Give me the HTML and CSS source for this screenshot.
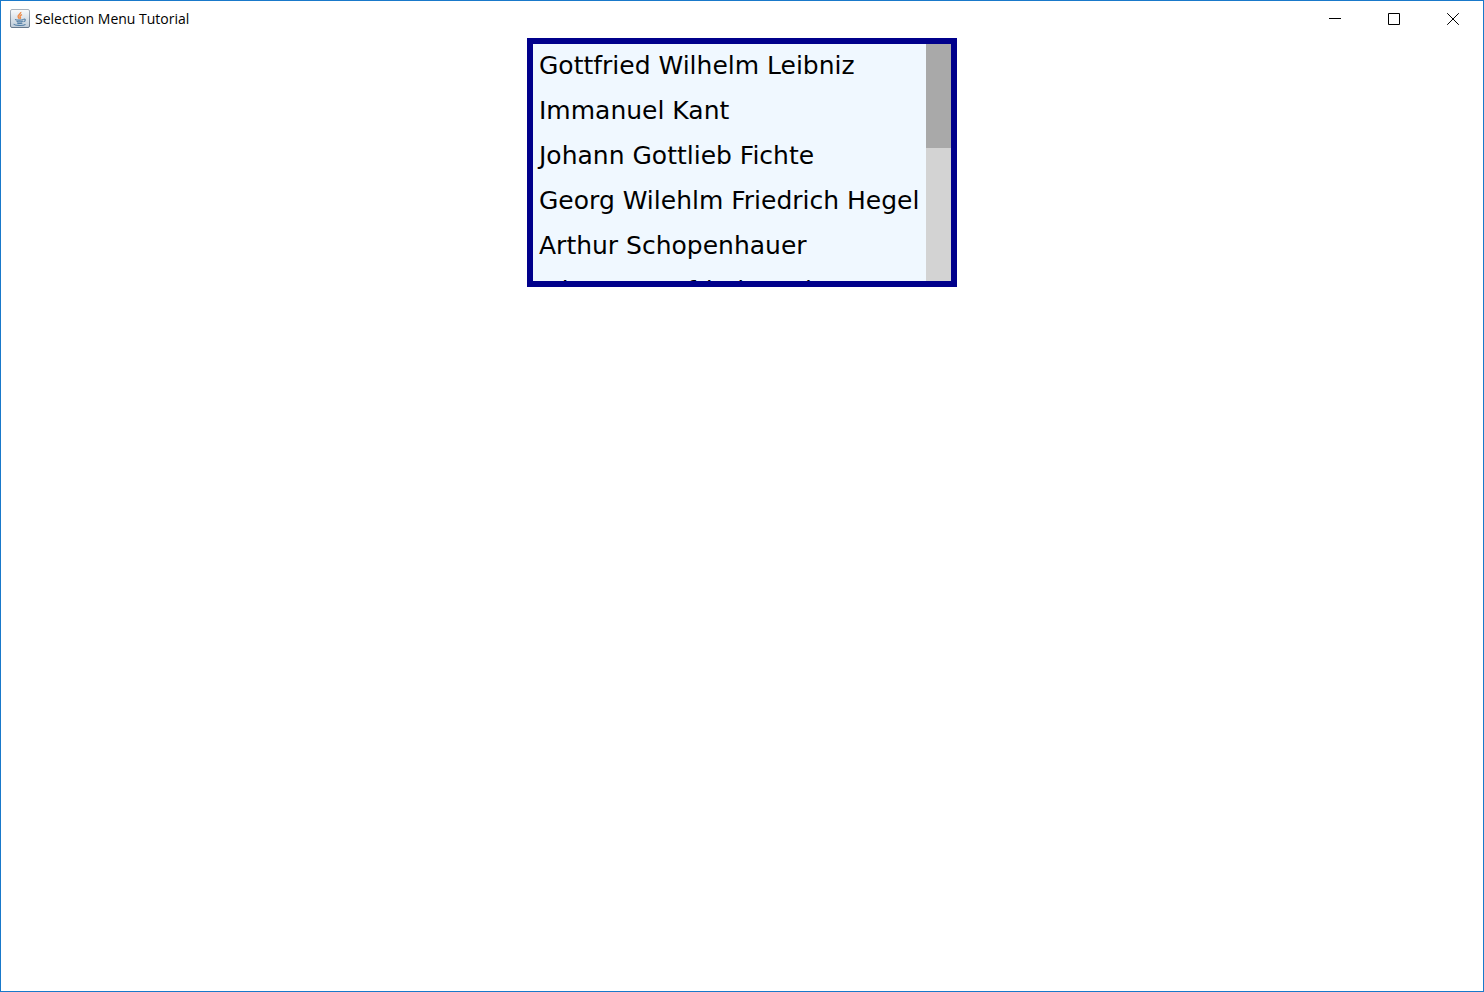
FILE: index.html
```html
<!DOCTYPE html>
<html lang="en">
<head>
<meta charset="utf-8">
<title>Selection Menu Tutorial</title>
<link rel="stylesheet" href="styles.css">
</head>
<body>
<div class="window">
  <header class="titlebar">
    <svg class="app-icon" viewBox="0 0 20 20" aria-hidden="true">
      <defs>
        <linearGradient id="tile" x1="0" y1="0" x2="0" y2="1">
          <stop offset="0" stop-color="#f8fafb"/>
          <stop offset="1" stop-color="#bdcbd8"/>
        </linearGradient>
        <linearGradient id="rim" x1="0" y1="0" x2="0" y2="1">
          <stop offset="0" stop-color="#a8b2bc"/>
          <stop offset="1" stop-color="#66788c"/>
        </linearGradient>
      </defs>
      <rect x=".5" y=".5" width="19" height="18" rx="1.5" fill="url(#tile)" stroke="url(#rim)"/>
      <path d="M10.800 3c.5 1.700-3.300 2.900-2.700 4.800.2.700.9 1.200 1.200 2M12 5.600c-2 .9-2.500 1.700-1.700 2.700.4.500.2 1-.2 1.500" fill="none" stroke="#ee8a46" stroke-width="1.400"/>
      <path d="M5 10.500c2 .9 6.500.9 8.500-.1M6.500 12.300c2 .7 4.600.7 6.300 0M7 14c1.800.6 4 .6 5.400 0M4 14.800c-.6 1.900 9.500 2.200 11.500.5M13.600 10.200c2.300-.6 2.300 1.900-.1 2.600" fill="none" stroke="#537fa6" stroke-width="1.100"/>
    </svg>
    <h1 class="title">Selection Menu Tutorial</h1>
    <div class="controls">
      <button class="control" type="button" aria-label="Minimize">
        <svg class="glyph" viewBox="0 0 12 12"><path d="M0 5.500h12"/></svg>
      </button>
      <button class="control" type="button" aria-label="Maximize">
        <svg class="glyph" viewBox="0 0 12 12"><path d="M.5.500h11v11h-11z"/></svg>
      </button>
      <button class="control" type="button" aria-label="Close">
        <svg class="glyph" viewBox="0 0 12 12"><path d="M.2.200l11.600 11.600M11.800.200L.2 11.800"/></svg>
      </button>
    </div>
  </header>
  <main class="content">
    <div class="menu">
      <ul class="items">
        <li><button class="item" type="button">Gottfried Wilhelm Leibniz</button></li>
        <li><button class="item" type="button">Immanuel Kant</button></li>
        <li><button class="item" type="button">Johann Gottlieb Fichte</button></li>
        <li><button class="item" type="button">Georg Wilehlm Friedrich Hegel</button></li>
        <li><button class="item" type="button">Arthur Schopenhauer</button></li>
        <li><button class="item" type="button">Johann Gottfried Herder</button></li>
      </ul>
      <div class="track"><div class="thumb"></div></div>
    </div>
  </main>
</div>
</body>
</html>
```
FILE: styles.css
```css
* { box-sizing: border-box; }
body { margin: 0; background: #fff; color: #000; }
.window {
  min-height: 100vh;
  border: 1px solid #1979ca;
  display: flex;
  flex-direction: column;
}
.titlebar {
  display: flex;
  align-items: center;
  height: 36px;
  margin-bottom: 1px;
  padding: 0 1px 0 9px;
}
.app-icon { width: 20px; height: 20px; margin-right: 5px; }
.title {
  margin: 0;
  flex: 1;
  font: 400 14px/20px "Open Sans", "Noto Sans", sans-serif;
}
.controls { display: flex; }
.control {
  width: 59px;
  height: 36px;
  padding: 0;
  border: 0;
  background: none;
  display: flex;
  align-items: center;
  justify-content: center;
}
.control:hover { background: #e5e5e5; }
.glyph { width: 12px; height: 12px; fill: none; stroke: #000; stroke-width: 1; }
.content { display: flex; justify-content: center; }
.menu {
  display: flex;
  width: 430px;
  height: 249px;
  border: 6px solid #00008b;
  background: #f0f8ff;
}
.items {
  flex: 1;
  margin: 0;
  padding: 0;
  list-style: none;
  overflow: hidden;
}
.item {
  display: block;
  width: 100%;
  height: 45px;
  padding: 0 6px 2px;
  border: 0;
  background: none;
  color: #000;
  font: 400 25px/43px "DejaVu Sans", sans-serif;
  text-align: left;
  white-space: nowrap;
}
.track { width: 25px; background: #d3d3d3; }
.thumb { height: 44%; background: #a9a9a9; }
```
